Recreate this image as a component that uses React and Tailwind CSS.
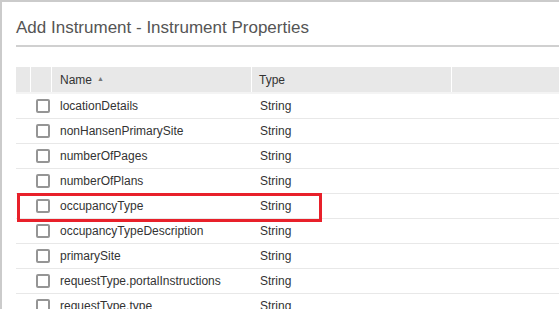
import React from 'react';

const rows = [
  'locationDetails',
  'nonHansenPrimarySite',
  'numberOfPages',
  'numberOfPlans',
  'occupancyType',
  'occupancyTypeDescription',
  'primarySite',
  'requestType.portalInstructions',
  'requestType.type',
];

const Checkbox = () => (
  <div className="w-[14px] h-[14px] rounded-[2px] border-2 border-[#959595] bg-white" />
);

export default function App() {
  return (
    <div
      className="w-[559px] h-[309px] overflow-hidden bg-white border-t-2 border-l-2 border-[#cbcbcb]"
      style={{ fontFamily: '"Liberation Sans", Arial, sans-serif' }}
    >
      <div className="pl-[14px]">
        <div className="h-[43px] flex items-center pt-[8px] text-[17px] text-[#555]">
          Add Instrument - Instrument Properties
        </div>
        <div className="h-[2px] bg-[#d0d0d0]" />

        <div className="mt-[20px] text-[12px] text-[#333]">
          <div className="flex h-[27px] bg-[#e8e8e8] border-b-[2px] border-[#f4f4f4]">
            <div className="w-[15px] border-r border-white" />
            <div className="w-[21px] border-r border-white" />
            <div className="w-[200px] border-r border-white flex items-center pl-[8px]">
              Name <span className="ml-[5px] text-[7px] text-[#777]">▲</span>
            </div>
            <div className="w-[200px] border-r border-white flex items-center pl-[7px]">Type</div>
            <div className="flex-1" />
          </div>

          {rows.map((name) => (
            <div key={name} className="relative flex h-[25px] items-center border-b border-[#e8e8e8]">
              <div className="w-[15px]" />
              <div className="w-[21px] flex justify-center pl-[2px]">
                <Checkbox />
              </div>
              <div className="w-[200px] pl-[8px]">{name}</div>
              <div className="w-[200px] pl-[8px]">String</div>
              {name === 'occupancyType' && (
                <div className="absolute left-[1px] top-[-1px] w-[305px] h-[29px] border-[3px] border-[#e8202a]" />
              )}
            </div>
          ))}
        </div>
      </div>
    </div>
  );
}
